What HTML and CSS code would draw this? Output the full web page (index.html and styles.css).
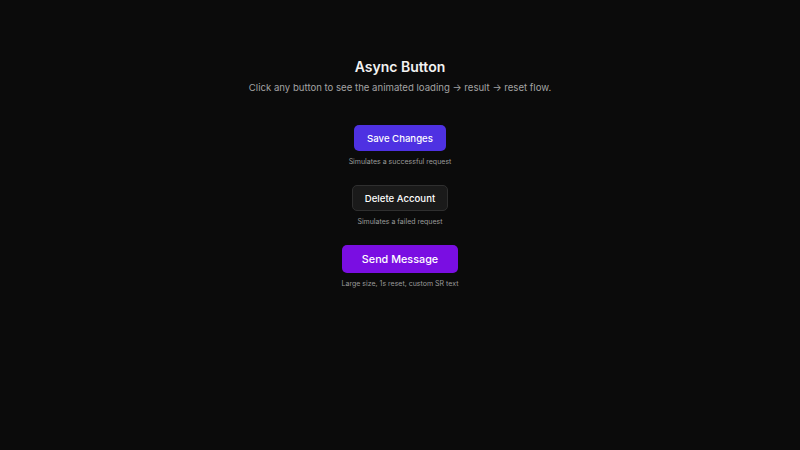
FILE: index.html
```html
<!DOCTYPE html>
<html lang="en">
<head>
<meta charset="utf-8">
<title>Async Button</title>
<link rel="stylesheet" href="styles.css">
</head>
<body>
<main class="page">
  <h1 class="title">Async Button</h1>
  <p class="subtitle">Click any button to see the animated loading → result → reset flow.</p>
  <div class="demos">
    <div class="demo">
      <button class="btn btn-primary">Save Changes</button>
      <span class="caption">Simulates a successful request</span>
    </div>
    <div class="demo">
      <button class="btn btn-dark">Delete Account</button>
      <span class="caption">Simulates a failed request</span>
    </div>
    <div class="demo">
      <button class="btn btn-violet btn-lg">Send Message</button>
      <span class="caption">Large size, 1s reset, custom SR text</span>
    </div>
  </div>
</main>
</body>
</html>
```
FILE: styles.css
```css
html, body {
  margin: 0;
  padding: 0;
  height: 100%;
  background: #0b0b0b;
  font-family: "Inter", "Noto Sans", sans-serif;
  color: #ededed;
}
.page {
  display: flex;
  flex-direction: column;
  align-items: center;
  padding-top: 58px;
}
.title {
  margin: 0;
  font-size: 14px;
  font-weight: 600;
  line-height: 18px;
  color: #f2f2f2;
}
.subtitle {
  margin: 4px 0 0;
  font-size: 9.6px;
  line-height: 16px;
  color: #a3a3a3;
}
.demos {
  display: flex;
  flex-direction: column;
  align-items: center;
  gap: 18px;
  margin-top: 29px;
}
.demo {
  display: flex;
  flex-direction: column;
  align-items: center;
  gap: 6px;
}
.btn {
  font-family: inherit;
  font-size: 9.6px;
  font-weight: 500;
  border-radius: 5px;
  height: 26px;
  padding: 0 12px;
  color: #fff;
  border: 1px solid transparent;
  cursor: pointer;
}
.btn-primary {
  background: #4e31e2;
}
.btn-dark {
  background: #1a1a1a;
  border-color: #2f2f2f;
}
.btn-violet {
  background: #7a0ee2;
}
.btn-lg {
  height: 28px;
  font-size: 10.8px;
  padding: 0 19px;
}
.caption {
  font-size: 7px;
  line-height: 10px;
  color: #9a9a9a;
}
```
